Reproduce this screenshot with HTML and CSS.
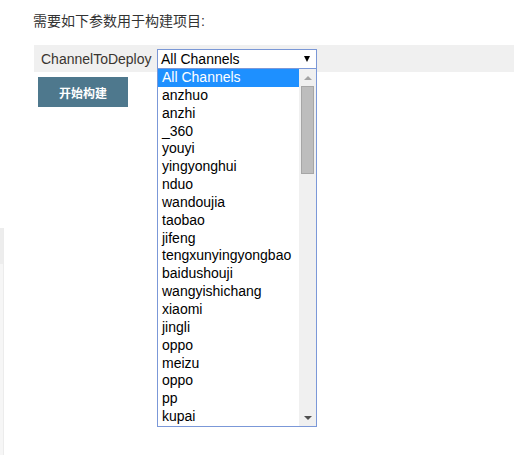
FILE: index.html
```html
<!DOCTYPE html>
<html lang="zh">
<head>
<meta charset="utf-8">
<title>构建参数</title>
<link rel="stylesheet" href="styles.css">
</head>
<body>
<div class="side-edge"><div class="side-head"></div></div>
<div class="page">
  <p class="title">需要如下参数用于构建项目:</p>
  <div class="param-row">
    <span class="param-label">ChannelToDeploy</span>
    <div class="select-wrap">
      <div class="select-box">
        <span class="select-value">All Channels</span>
        <span class="select-arrow"></span>
      </div>
      <div class="dropdown">
        <ul class="options">
          <li class="opt selected">All Channels</li>
          <li class="opt">anzhuo</li>
          <li class="opt">anzhi</li>
          <li class="opt">_360</li>
          <li class="opt">youyi</li>
          <li class="opt">yingyonghui</li>
          <li class="opt">nduo</li>
          <li class="opt">wandoujia</li>
          <li class="opt">taobao</li>
          <li class="opt">jifeng</li>
          <li class="opt">tengxunyingyongbao</li>
          <li class="opt">baidushouji</li>
          <li class="opt">wangyishichang</li>
          <li class="opt">xiaomi</li>
          <li class="opt">jingli</li>
          <li class="opt">oppo</li>
          <li class="opt">meizu</li>
          <li class="opt">oppo</li>
          <li class="opt">pp</li>
          <li class="opt">kupai</li>
        </ul>
        <div class="scrollbar">
          <div class="sb-btn"><span class="tri-up"></span></div>
          <div class="sb-track"><div class="sb-thumb"></div></div>
          <div class="sb-btn"><span class="tri-down"></span></div>
        </div>
      </div>
    </div>
  </div>
  <button class="build-btn">开始构建</button>
</div>
</body>
</html>
```
FILE: styles.css
```css
html, body {
  margin: 0;
  padding: 0;
  background: #ffffff;
}
body {
  min-height: 455px;
  font-family: "Liberation Sans", Arial, "Noto Sans CJK SC", sans-serif;
  color: #333333;
  font-size: 14px;
}
.side-edge {
  position: absolute;
  left: 0;
  top: 228px;
  width: 3px;
  height: 227px;
  background: #f6f6f6;
  border-right: 1px solid #ececec;
}
.side-head {
  height: 36px;
  background: #ededed;
}
.page {
  position: relative;
  min-height: 440px;
  padding: 11px 0 0 0;
}
.title {
  margin: 0 0 0 33px;
  font-family: "Liberation Sans", "Noto Sans CJK SC", sans-serif;
  font-size: 14px;
  line-height: 20px;
  color: #333333;
}
.param-row {
  margin: 14px 0 0 34px;
  height: 27px;
  background: #f0f0f0;
  display: flex;
  align-items: flex-start;
}
.param-label {
  padding: 4px 0 0 7px;
  width: 116px;
  color: #3a3530;
  font-size: 14px;
  line-height: 20px;
  white-space: nowrap;
}
.select-wrap {
  position: relative;
  z-index: 10;
  margin-top: 4px;
}
.select-box {
  box-sizing: border-box;
  width: 160px;
  height: 20px;
  border: 1px solid #7a97d6;
  border-bottom-color: #a9b9dc;
  background: #ffffff;
  display: flex;
  align-items: center;
  justify-content: space-between;
  padding: 0 6px 0 3px;
}
.select-value {
  font-size: 14px;
  color: #000000;
  line-height: 18px;
}
.select-arrow {
  width: 0;
  height: 0;
  border-left: 3.5px solid transparent;
  border-right: 3.5px solid transparent;
  border-top: 6px solid #000000;
}
.dropdown {
  position: absolute;
  z-index: 20;
  left: 0;
  top: 19px;
  box-sizing: border-box;
  width: 160px;
  height: 359px;
  border: 1px solid #7b98d8;
  background: #ffffff;
  display: flex;
}
.options {
  list-style: none;
  margin: 0;
  padding: 0;
  flex: 1;
}
.opt {
  height: 17.85px;
  line-height: 17.85px;
  padding-left: 4px;
  font-size: 14px;
  color: #000000;
  white-space: nowrap;
}
.opt.selected {
  background: #1e90ff;
  color: #ffffff;
}
.scrollbar {
  width: 17px;
  background: #f0f0f0;
  display: flex;
  flex-direction: column;
}
.sb-btn {
  height: 17px;
  display: flex;
  align-items: center;
  justify-content: center;
}
.tri-up {
  width: 0;
  height: 0;
  border-left: 4px solid transparent;
  border-right: 4px solid transparent;
  border-bottom: 4px solid #a3a3a3;
}
.tri-down {
  width: 0;
  height: 0;
  border-left: 4px solid transparent;
  border-right: 4px solid transparent;
  border-top: 4px solid #505050;
}
.sb-track {
  flex: 1;
  padding: 0 2px;
}
.sb-thumb {
  box-sizing: border-box;
  height: 88px;
  background: #bdbdbd;
  border: 1px solid #a6a6a6;
}
.build-btn {
  display: block;
  margin: 5px 0 0 38px;
  width: 90px;
  height: 30px;
  border: none;
  background: #4e788d;
  color: #ffffff;
  font-family: "Liberation Sans", "Noto Sans CJK SC", sans-serif;
  font-size: 12px;
  font-weight: bold;
  padding: 0;
}
```
